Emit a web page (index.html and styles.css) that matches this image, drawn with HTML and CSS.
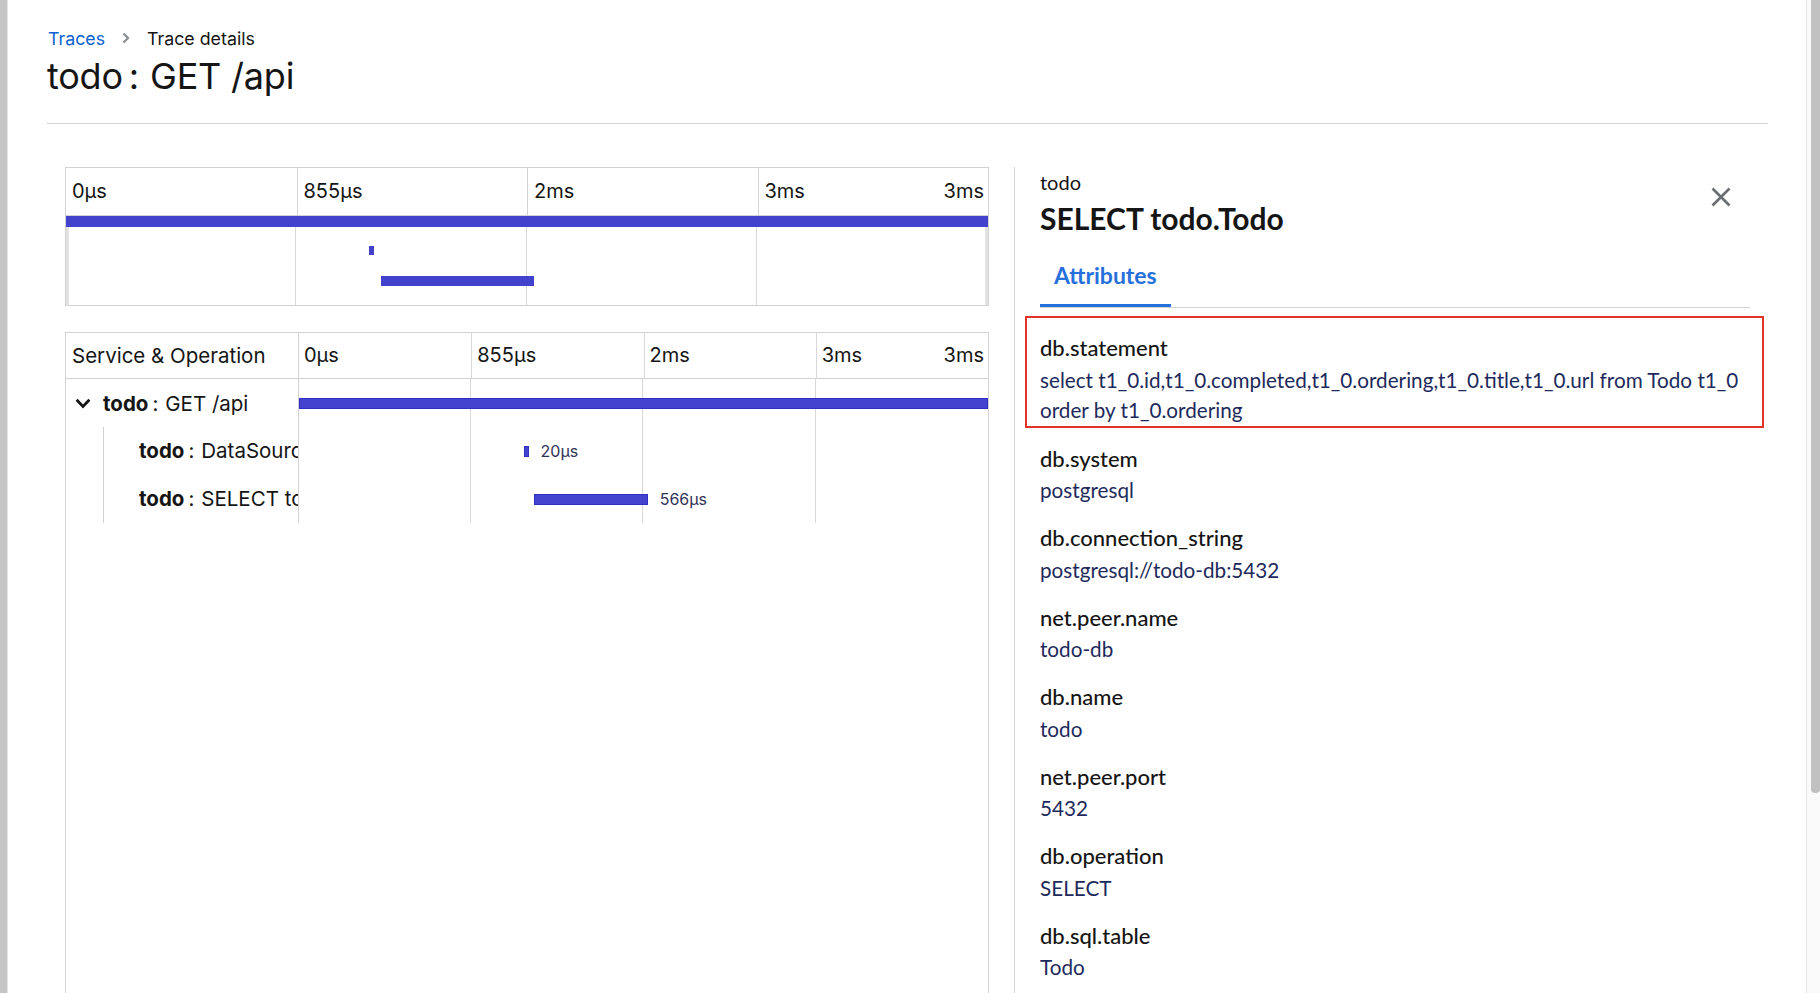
FILE: index.html
```html
<!DOCTYPE html>
<html lang="en">
<head>
<meta charset="utf-8">
<title>Trace details</title>
<link rel="stylesheet" href="styles.css">
</head>
<body>
<div class="app">
  <div class="edge"></div>
  <main class="page">
    <header class="page-header">
      <nav class="breadcrumb">
        <a class="crumb-link" href="#">Traces</a>
        <svg class="crumb-sep" width="8" height="12" viewBox="0 0 8 12"><path d="M1.5 1.5 L6 6 L1.5 10.5" fill="none" stroke="#8a8d90" stroke-width="2.2"/></svg>
        <span class="crumb-current">Trace details</span>
      </nav>
      <h1 class="page-title">todo<span class="colon">:</span>GET /api</h1>
    </header>

    <div class="content">
      <section class="left">
        <div class="minimap">
          <div class="mm-head">
            <div class="mm-col">0µs</div>
            <div class="mm-col">855µs</div>
            <div class="mm-col">2ms</div>
            <div class="mm-col mm-last"><span>3ms</span><span>3ms</span></div>
          </div>
          <div class="mm-root"></div>
          <div class="mm-lanes">
            <div class="mm-lane"><div class="mm-bar mm-bar-thin" style="left:32.9%;width:5px"></div></div>
            <div class="mm-lane"><div class="mm-bar" style="left:34.2%;width:16.6%"></div></div>
          </div>
        </div>

        <div class="trace-table">
          <div class="thead">
            <div class="name-col th-name">Service &amp; Operation</div>
            <div class="time-col th-ticks">
              <div class="tick">0µs</div>
              <div class="tick">855µs</div>
              <div class="tick">2ms</div>
              <div class="tick tick-last"><span>3ms</span><span>3ms</span></div>
            </div>
          </div>

          <div class="row">
            <div class="name-col name-root">
              <svg class="chev" width="16" height="11" viewBox="0 0 16 11"><path d="M1.6 1.8 L8 8.4 L14.4 1.8" fill="none" stroke="#151515" stroke-width="2.8"/></svg>
              <span class="label-root"><span class="svc">todo</span><span class="op-colon">:</span>GET /api</span>
            </div>
            <div class="time-col lane"><div class="bar bar-full"></div></div>
          </div>

          <div class="row">
            <div class="name-col name-child">
              <span class="guide"></span>
              <span class="label"><span class="svc">todo</span><span class="op-colon">:</span>DataSource.getConnection</span>
            </div>
            <div class="time-col lane">
              <div class="mark" style="left:32.6%"><div class="bar" style="width:5px"></div><span class="dur">20µs</span></div>
            </div>
          </div>

          <div class="row">
            <div class="name-col name-child">
              <span class="guide"></span>
              <span class="label"><span class="svc">todo</span><span class="op-colon">:</span>SELECT todo.Todo</span>
            </div>
            <div class="time-col lane">
              <div class="mark" style="left:34.06%"><div class="bar" style="width:114px"></div><span class="dur">566µs</span></div>
            </div>
          </div>
        </div>
      </section>

      <aside class="detail">
        <div class="detail-head">
          <div>
            <div class="detail-service">todo</div>
            <div class="detail-title">SELECT todo.Todo</div>
          </div>
          <button class="close" type="button" aria-label="Close">
            <svg width="22" height="22" viewBox="0 0 22 22"><path d="M2.5 2.5 L19.5 19.5 M19.5 2.5 L2.5 19.5" fill="none" stroke="#6a6e73" stroke-width="2.6"/></svg>
          </button>
        </div>
        <div class="tabs">
          <div class="tab tab-active">Attributes</div>
        </div>
        <dl class="attrs">
          <div class="attr attr-highlight">
            <dt>db.statement</dt>
            <dd>select t1_0.id,t1_0.completed,t1_0.ordering,t1_0.title,t1_0.url from Todo t1_0 order by t1_0.ordering</dd>
          </div>
          <div class="attr"><dt>db.system</dt><dd>postgresql</dd></div>
          <div class="attr"><dt>db.connection_string</dt><dd>postgresql://todo-db:5432</dd></div>
          <div class="attr"><dt>net.peer.name</dt><dd>todo-db</dd></div>
          <div class="attr"><dt>db.name</dt><dd>todo</dd></div>
          <div class="attr"><dt>net.peer.port</dt><dd>5432</dd></div>
          <div class="attr"><dt>db.operation</dt><dd>SELECT</dd></div>
          <div class="attr"><dt>db.sql.table</dt><dd>Todo</dd></div>
        </dl>
      </aside>
    </div>
  </main>
  <div class="scrollbar"><div class="thumb"></div></div>
</div>
</body>
</html>
```

FILE: styles.css
```css
* { box-sizing: border-box; }

html, body {
  margin: 0;
  height: 100%;
}

body {
  font-family: Inter, "Noto Sans", "Liberation Sans", sans-serif;
  color: #151515;
  background: #fff;
  overflow: hidden;
}

.app {
  display: flex;
  height: 100vh;
}

.edge {
  width: 8px;
  flex-shrink: 0;
  background: #c6c6c6;
  border-right: 1px solid #e4e4e4;
}

.page {
  flex: 1;
  min-width: 0;
  display: flex;
  flex-direction: column;
  padding: 0 38px 0 39px;
}

/* header */
.page-header {
  padding: 26px 0 27px;
  border-bottom: 1px solid #d2d2d2;
}

.breadcrumb {
  display: flex;
  align-items: center;
  height: 24px;
  font-size: 17.8px;
  padding-left: 1px;
}

.crumb-link {
  color: #0b63d0;
  text-decoration: none;
}

.crumb-sep {
  margin: 0 17px 0 17px;
}

.crumb-current {
  color: #151515;
}

.page-title {
  margin: 6px 0 0;
  font-size: 36px;
  line-height: 40px;
  font-weight: 400;
  letter-spacing: -0.2px;
}

.colon {
  margin: 0 11px 0 6px;
}

/* content */
.content {
  flex: 1;
  min-height: 0;
  display: flex;
}

.left {
  width: 967px;
  flex-shrink: 0;
  padding: 43px 25px 0 18px;
  display: flex;
  flex-direction: column;
}

/* minimap */
.minimap {
  border: 1px solid #d2d2d2;
  font-size: 20px;
}

.mm-head {
  display: grid;
  grid-template-columns: repeat(4, 1fr);
  height: 48px;
  border-bottom: 1px solid #d2d2d2;
}

.mm-col {
  padding-left: 6px;
  line-height: 47px;
  border-left: 1px solid #d2d2d2;
}

.mm-col:first-child {
  border-left: none;
}

.mm-last {
  display: flex;
  justify-content: space-between;
  padding-right: 4px;
}

.mm-root {
  height: 11px;
  background: #4242cd;
}

.mm-lanes,
.lane {
  background-image: linear-gradient(to right,
    transparent calc(25% - 1px), #d8d8d8 calc(25% - 1px), #d8d8d8 25%, transparent 25%,
    transparent calc(50% - 1px), #d8d8d8 calc(50% - 1px), #d8d8d8 50%, transparent 50%,
    transparent calc(75% - 1px), #d8d8d8 calc(75% - 1px), #d8d8d8 75%, transparent 75%);
}

.mm-lanes {
  height: 78px;
  padding-top: 19px;
  box-shadow: inset 3px 0 0 #e3e3e3, inset -3px 0 0 #e3e3e3;
}

.mm-lane {
  position: relative;
  height: 30px;
}

.mm-bar {
  position: absolute;
  top: 0;
  height: 10px;
  background: #4242cd;
}

.mm-bar-thin {
  height: 9px;
}

/* trace table */
.trace-table {
  flex: 1;
  margin-top: 26px;
  border: 1px solid #d2d2d2;
  border-bottom: none;
  font-size: 20.5px;
}

.thead {
  display: flex;
  height: 46px;
  border-bottom: 1px solid #d2d2d2;
}

.name-col {
  width: 233px;
  flex-shrink: 0;
  border-right: 1px solid #d2d2d2;
  white-space: nowrap;
  overflow: hidden;
}

.time-col {
  flex: 1;
  min-width: 0;
}

.th-name {
  padding-left: 6px;
  line-height: 45px;
}

.th-ticks {
  display: grid;
  grid-template-columns: repeat(4, 1fr);
  font-size: 20px;
}

.tick {
  padding-left: 5px;
  line-height: 45px;
  border-left: 1px solid #d8d8d8;
}

.tick:first-child {
  border-left: none;
}

.tick-last {
  display: flex;
  justify-content: space-between;
  padding-right: 4px;
}

.row {
  display: flex;
  height: 48px;
}

.name-root {
  display: flex;
  align-items: center;
  padding-left: 9px;
}

.chev {
  margin-right: 12px;
  flex-shrink: 0;
}

.label-root {
  white-space: nowrap;
}

.svc {
  font-weight: 700;
}

.op-colon {
  margin: 0 7px 0 4px;
}

.name-child {
  display: flex;
  align-items: stretch;
  padding-left: 37px;
}

.guide {
  width: 1px;
  flex-shrink: 0;
  background: #d2d2d2;
}

.label {
  margin-left: 35px;
  line-height: 48px;
}

.lane {
  position: relative;
}

.bar {
  height: 11px;
  background: #4343cf;
  border: 1px solid #2f2fc4;
  flex-shrink: 0;
}

.bar-full {
  position: absolute;
  left: 0;
  right: 0;
  top: 19px;
}

.mark {
  position: absolute;
  top: 0;
  height: 48px;
  display: flex;
  align-items: center;
  gap: 12px;
  white-space: nowrap;
}

.dur {
  font-size: 16px;
  color: #2f3258;
}

/* detail panel */
.detail {
  flex: 1;
  min-width: 0;
  margin-top: 43px;
  border-left: 1px solid #d2d2d2;
  padding: 1px 18px 0 25px;
  font-family: Lato, "Noto Sans", sans-serif;
}

.detail-head {
  display: flex;
  justify-content: space-between;
  align-items: flex-start;
}

.detail-service {
  font-size: 20px;
  line-height: 28px;
}

.detail-title {
  margin-top: 4px;
  font-size: 30px;
  line-height: 36px;
  font-weight: 700;
}

.close {
  margin: 18px 18px 0 0;
  padding: 0;
  border: none;
  background: none;
  width: 22px;
  height: 22px;
  display: block;
}

.close svg {
  display: block;
}

.tabs {
  display: flex;
  margin-top: 7px;
  border-bottom: 1px solid #d2d2d2;
}

.tab {
  padding: 18px 14px 15px;
  font-size: 23px;
  line-height: 28px;
  font-weight: 700;
  color: #2670dc;
  border-bottom: 3px solid #2670dc;
}

.attrs {
  margin: 8px -14px 0 -15px;
  padding: 0;
}

.attr {
  border: 2px solid transparent;
  padding: 14px 13px 0;
}

.attr-highlight {
  border-color: #e2322a;
  padding-top: 15px;
  padding-bottom: 1px;
}

.attr dt {
  font-size: 22px;
  line-height: 30px;
  font-weight: 500;
  color: #151515;
}

.attr dd {
  margin: 1.5px 0 0;
  font-size: 20.7px;
  line-height: 30px;
  color: #1e2a5c;
}

/* fake scrollbar */
.scrollbar {
  width: 14px;
  flex-shrink: 0;
  background: #fafafa;
  border-left: 1px solid #e6e6e6;
}

.thumb {
  margin-left: 4px;
  width: 9px;
  height: 793px;
  background: #c1c1c1;
  border-radius: 0 0 4px 4px;
}
```
